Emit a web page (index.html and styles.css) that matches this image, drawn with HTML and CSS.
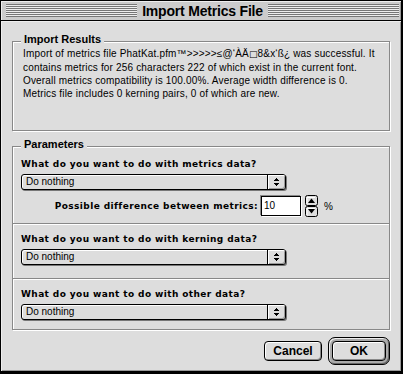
FILE: index.html
```html
<!DOCTYPE html>
<html>
<head>
<meta charset="utf-8">
<link rel="stylesheet" href="styles.css">
</head>
<body>
<div class="window">
  <div class="titlebar">
    <span class="stripes"></span>
    <span class="title">Import Metrics File</span>
    <span class="stripes"></span>
  </div>
  <div class="content">
    <section class="group results">
      <div class="group-label">Import Results</div>
      <p class="msg">Import of metrics file PhatKat.pfm™&gt;&gt;&gt;&gt;&gt;≤@‘ÀÄ<span class="sym">□</span>8&amp;x‘ß¿ was successful. It<br>contains metrics for 256 characters 222 of which exist in the current font.<br>Overall metrics compatibility is 100.00%. Average width difference is 0.<br>Metrics file includes 0 kerning pairs, 0 of which are new.</p>
    </section>
    <section class="group params">
      <div class="group-label">Parameters</div>
      <div class="sub sub1">
        <div class="q">What do you want to do with metrics data?</div>
        <div class="popup"><span class="popup-text">Do nothing</span><span class="popup-arrow"><svg width="5" height="8" viewBox="0 0 5 8"><rect x="2" y="0" width="1" height="1"/><rect x="1" y="1" width="3" height="1"/><rect x="0" y="2" width="5" height="1"/><rect x="0" y="5" width="5" height="1"/><rect x="1" y="6" width="3" height="1"/><rect x="2" y="7" width="1" height="1"/></svg></span></div>
        <div class="diff-row">
          <span class="diff-label">Possible difference between metrics:</span>
          <span class="field">10</span>
          <span class="spinner"><svg width="13" height="22" viewBox="0 0 13 22"><rect x="0.5" y="0.5" width="12" height="10" rx="2" fill="#ddd" stroke="#000"/><rect x="0.5" y="11.5" width="12" height="10" rx="2" fill="#ddd" stroke="#000"/><path d="M2 2.5h8M2 2.5v7" stroke="#fff" fill="none"/><path d="M2 13.5h8M2 13.5v7" stroke="#fff" fill="none"/><polygon points="3,8 10,8 6.5,3.5" fill="#000"/><polygon points="3,14 10,14 6.5,18.5" fill="#000"/></svg></span>
          <span class="pct">%</span>
        </div>
      </div>
      <div class="sub sub2">
        <div class="q">What do you want to do with kerning data?</div>
        <div class="popup"><span class="popup-text">Do nothing</span><span class="popup-arrow"><svg width="5" height="8" viewBox="0 0 5 8"><rect x="2" y="0" width="1" height="1"/><rect x="1" y="1" width="3" height="1"/><rect x="0" y="2" width="5" height="1"/><rect x="0" y="5" width="5" height="1"/><rect x="1" y="6" width="3" height="1"/><rect x="2" y="7" width="1" height="1"/></svg></span></div>
      </div>
      <div class="sub sub3">
        <div class="q">What do you want to do with other data?</div>
        <div class="popup"><span class="popup-text">Do nothing</span><span class="popup-arrow"><svg width="5" height="8" viewBox="0 0 5 8"><rect x="2" y="0" width="1" height="1"/><rect x="1" y="1" width="3" height="1"/><rect x="0" y="2" width="5" height="1"/><rect x="0" y="5" width="5" height="1"/><rect x="1" y="6" width="3" height="1"/><rect x="2" y="7" width="1" height="1"/></svg></span></div>
      </div>
    </section>
    <div class="buttons">
      <button class="btn cancel">Cancel</button>
      <div class="default-ring"><button class="btn ok">OK</button></div>
    </div>
  </div>
</div>
</body>
</html>
```
FILE: styles.css
```css
html, body {
  margin: 0;
  padding: 0;
  background: #000;
}
body {
  width: 403px;
  height: 374px;
  overflow: hidden;
  font-family: "Liberation Sans", Arial, sans-serif;
  font-size: 10px;
  color: #000;
}
.window {
  box-sizing: border-box;
  width: 402px;
  height: 372px;
  border: 1px solid #000;
  background: #ddd;
  display: flex;
  flex-direction: column;
}
.titlebar {
  box-sizing: border-box;
  height: 20px;
  flex: 0 0 20px;
  background: #ccc;
  border-bottom: 1px solid #000;
  box-shadow: inset 1px 1px 0 #eee, inset -1px 0 0 #999;
  display: flex;
  align-items: center;
  padding: 0 2px 0 5px;
}
.stripes {
  flex: 1;
  height: 13px;
  background: repeating-linear-gradient(to bottom, #777 0 1px, #eee 1px 2px);
}
.title {
  font-family: "Liberation Sans", Arial, sans-serif;
  font-weight: bold;
  font-size: 14px;
  letter-spacing: -0.2px;
  line-height: 16px;
  padding: 0 5px;
}
.content {
  flex: 1;
  padding: 20px 11px 0 11px;
  box-shadow: inset 1px 1px 0 #eee, inset -1px -1px 0 #999;
}
.group {
  box-sizing: border-box;
  border: 1px solid #888;
  box-shadow: inset 1px 1px 0 #fff, 1px 1px 0 #fff;
}
.group-label {
  width: fit-content;
  margin: -9px 0 0 8px;
  padding: 0 3px;
  background: #ddd;
  font-family: "Liberation Sans", Arial, sans-serif;
  font-weight: bold;
  font-size: 11px;
  line-height: 12px;
}
.results {
  height: 90px;
}
.msg {
  margin: 2px 0 0 0;
  padding-left: 10px;
  font-size: 10px;
  letter-spacing: 0.17px;
  line-height: 13px;
  white-space: nowrap;
}
.sym {
  font-family: "DejaVu Sans", sans-serif;
  font-size: 9px;
}
.params {
  margin-top: 15px;
}
.sub {
  padding-left: 8px;
}
.sub1 {
  padding-top: 8px;
  padding-bottom: 6px;
}
.sub2 {
  border-top: 1px solid #888;
  box-shadow: inset 0 1px 0 #fff;
  padding-top: 9px;
  padding-bottom: 13px;
}
.sub3 {
  border-top: 1px solid #888;
  box-shadow: inset 0 1px 0 #fff;
  padding-top: 9px;
  padding-bottom: 9px;
}
.q, .diff-label {
  font-family: "DejaVu Sans", sans-serif;
  font-weight: bold;
  font-size: 9px;
  letter-spacing: 0.4px;
  line-height: 12px;
  white-space: nowrap;
}
.popup {
  box-sizing: border-box;
  margin-top: 4px;
  width: 265px;
  height: 16px;
  border: 1px solid #000;
  border-radius: 3px;
  background: #ddd;
  box-shadow: inset 1px 1px 0 #fff, 1px 1px 0 #777;
  display: flex;
  align-items: center;
}
.popup-text {
  flex: 1;
  padding-left: 4px;
  font-size: 10px;
  line-height: 14px;
}
.popup-arrow {
  box-sizing: border-box;
  width: 18px;
  height: 14px;
  border-left: 1px solid #000;
  border-radius: 0 2px 2px 0;
  box-shadow: inset 1px 1px 0 #fff, inset -1px -1px 0 #999;
  display: flex;
  align-items: center;
  justify-content: center;
}
.popup-arrow svg {
  display: block;
  fill: #000;
}
.diff-row {
  margin-top: 5px;
  height: 22px;
  display: flex;
  align-items: center;
}
.diff-label {
  width: 237px;
  text-align: right;
}
.field {
  box-sizing: border-box;
  margin-left: 3px;
  width: 40px;
  height: 20px;
  border: 1px solid #000;
  background: #fff;
  box-shadow: -1px -1px 0 #888, 1px 1px 0 #fff;
  padding-left: 2px;
  font-size: 10px;
  line-height: 18px;
}
.spinner {
  margin-left: 4px;
  width: 13px;
  height: 22px;
}
.spinner svg {
  display: block;
}
.pct {
  margin-left: 6px;
  font-size: 10px;
}
.buttons {
  margin-top: 7px;
  display: flex;
  justify-content: flex-end;
  align-items: center;
  gap: 6px;
}
.btn {
  box-sizing: border-box;
  height: 20px;
  border: 1px solid #000;
  border-radius: 4px;
  background: #ddd;
  box-shadow: inset 1px 1px 0 #fff, inset -1px -1px 0 #888;
  font-family: "Liberation Sans", Arial, sans-serif;
  font-weight: bold;
  font-size: 12px;
  padding: 0;
  color: #000;
}
.cancel {
  width: 58px;
}
.ok {
  width: 54px;
}
.default-ring {
  display: flex;
  padding: 3px;
  border: 1px solid #000;
  border-radius: 7px;
  background: #aaa;
  box-shadow: inset 1px 1px 0 #eee, inset -1px -1px 0 #666;
}
```
